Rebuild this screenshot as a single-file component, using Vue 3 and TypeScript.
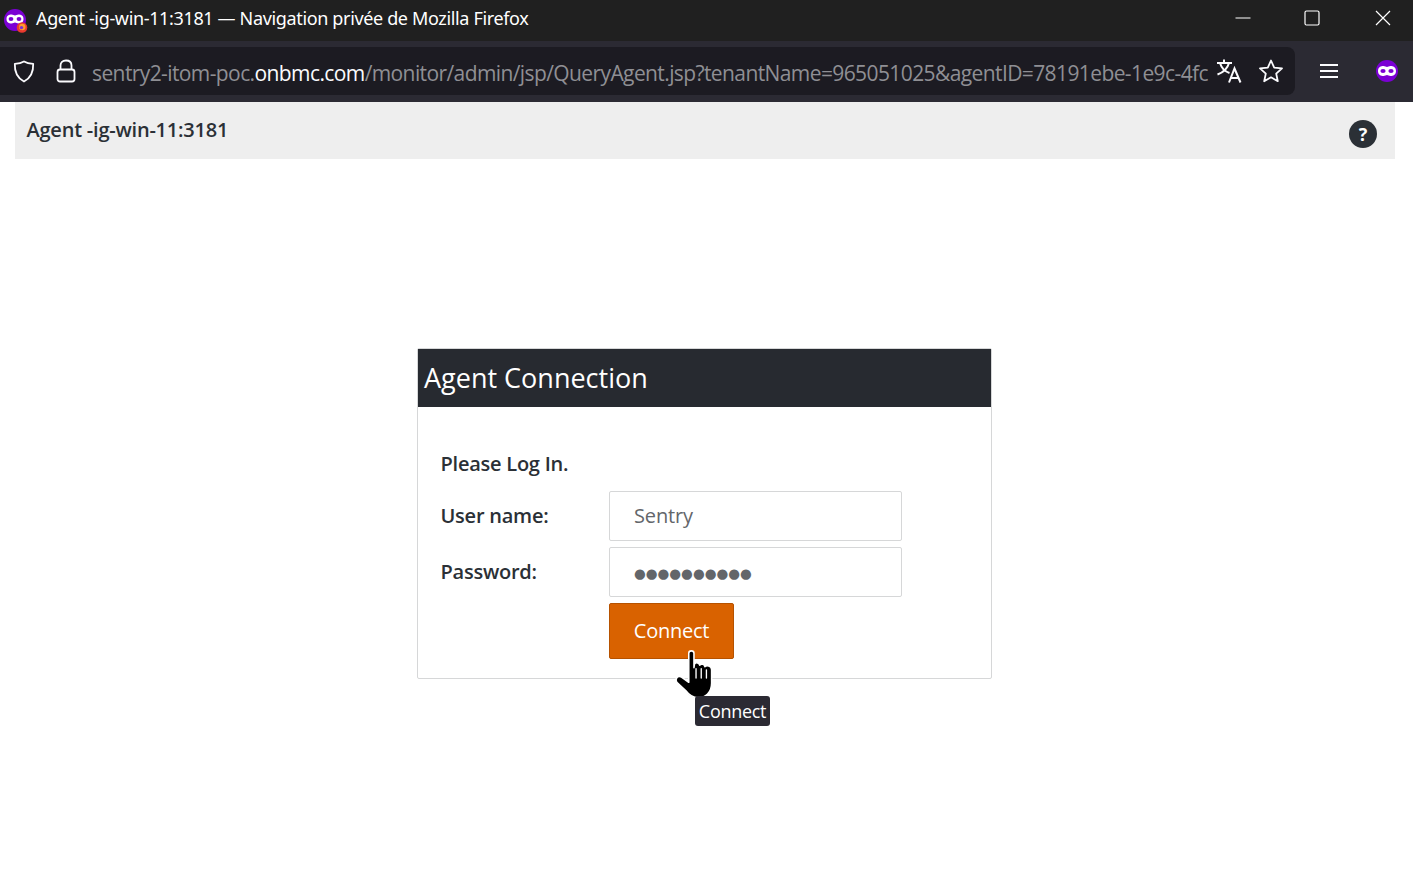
<script setup lang="ts">
const title = 'Agent -ig-win-11:3181'
const dots = '●●●●●●●●●●'
</script>

<template>
  <div class="window">
    <div class="titlebar">
      <div class="tb-left">
        <span class="favicon">
          <svg width="24" height="24" viewBox="0 0 24 24">
            <circle cx="11" cy="11" r="11" fill="#7b00d4" />
            <path d="M2.500 10C2.500 6.500 5 5.500 7.500 5.500C9 5.500 10 6.500 11 6.500C12 6.500 13 5.500 14.500 5.500C17 5.500 19.500 6.500 19.500 10C19.500 13.500 17 14.500 14.500 14.500C13 14.500 12 13.500 11 13.500C10 13.500 9 14.500 7.500 14.500C5 14.500 2.500 13.500 2.500 10Z" fill="#fff" />
            <ellipse cx="7" cy="10" rx="2.400" ry="1.900" fill="#7b00d4" />
            <ellipse cx="15" cy="10" rx="2.400" ry="1.900" fill="#7b00d4" />
            <circle cx="18" cy="18.500" r="5.300" fill="#e8392f" />
            <circle cx="18.300" cy="18" r="3.200" fill="#ff9b2b" />
            <circle cx="17.500" cy="18.600" r="1.700" fill="#7b2fd4" />
          </svg>
        </span>
        <span class="tb-title">{{ title }} — Navigation privée de Mozilla Firefox</span>
      </div>
      <div class="win-ctrls">
        <svg class="c1" width="16" height="16" viewBox="0 0 16 16"><path d="M0.500 8H15.500" stroke="#fff" stroke-width="1" /></svg>
        <svg class="c2" width="16" height="16" viewBox="0 0 16 16"><rect x="1" y="1" width="14" height="14" rx="1.500" fill="none" stroke="#fff" stroke-width="1.200" /></svg>
        <svg class="c3" width="16" height="16" viewBox="0 0 16 16"><path d="M1 1L15 15M15 1L1 15" stroke="#fff" stroke-width="1.200" /></svg>
      </div>
    </div>

    <div class="navbar">
      <div class="urlbar">
        <svg class="i-shield" width="24" height="24" viewBox="0 0 24 24" fill="none">
          <path d="M12 2.500C9.500 4 6.500 4.600 2.800 4.800C2.500 13 5 19 12 22.500C19 19 21.500 13 21.200 4.800C17.500 4.600 14.500 4 12 2.500Z" stroke="#fbfbfe" stroke-width="1.800" stroke-linejoin="round" />
        </svg>
        <svg class="i-lock" width="20" height="24" viewBox="0 0 20 24" fill="none">
          <rect x="1.500" y="10.500" width="17" height="12" rx="2.500" stroke="#fbfbfe" stroke-width="1.800" />
          <path d="M4.500 10V6.500C4.500 3.500 6.500 1.500 10 1.500C13.500 1.500 15.500 3.500 15.500 6.500V10" stroke="#fbfbfe" stroke-width="1.800" />
        </svg>
        <div class="url"><span class="dim">sentry2-itom-poc.</span><span class="bright">onbmc.com</span><span class="dim">/monitor/admin/jsp/QueryAgent.jsp?tenantName=965051025&amp;agentID=78191ebe-1e9c-4fc</span></div>
        <svg class="i-trans" width="26" height="24" viewBox="0 0 26 24" fill="none" stroke="#fbfbfe" stroke-width="2">
          <path d="M1 4H16M8 0.500V4M13 4C11.500 9.500 7 13.500 1.500 15.500M4 4C5.500 9 9 12.500 13.500 14" />
          <path d="M13 23.500L18.500 9.500L24.500 23.500M15 19H22.500" />
        </svg>
        <svg class="i-star" width="26" height="26" viewBox="0 0 26 26" fill="none">
          <path d="M13 2.500L16.200 9.600L24 10.400L18.200 15.600L19.800 23.200L13 19.300L6.200 23.200L7.800 15.600L2 10.400L9.800 9.600Z" stroke="#fbfbfe" stroke-width="1.800" stroke-linejoin="round" />
        </svg>
      </div>
      <div class="nav-right">
        <svg width="18" height="16" viewBox="0 0 18 16"><path d="M0 2H18M0 8H18M0 14H18" stroke="#fbfbfe" stroke-width="2" /></svg>
        <svg class="mask" width="22" height="22" viewBox="0 0 22 22">
          <circle cx="11" cy="11" r="11" fill="#7b00d4" />
          <path d="M2 11C2 7 5 6 7.500 6C9 6 10 7 11 7C12 7 13 6 14.500 6C17 6 20 7 20 11C20 15 17 16 14.500 16C13 16 12 15 11 15C10 15 9 16 7.500 16C5 16 2 15 2 11Z" fill="#fff" />
          <ellipse cx="7" cy="11" rx="2.600" ry="2.100" fill="#7b00d4" />
          <ellipse cx="15" cy="11" rx="2.600" ry="2.100" fill="#7b00d4" />
        </svg>
      </div>
    </div>

    <div class="page">
      <header class="page-head">
        <span class="page-title">{{ title }}</span>
        <span class="help">?</span>
      </header>

      <section class="card">
        <h2 class="card-head">Agent Connection</h2>
        <div class="card-body">
          <p class="lead">Please Log In.</p>
          <div class="row">
            <label>User name:</label>
            <div class="field">Sentry</div>
          </div>
          <div class="row">
            <label>Password:</label>
            <div class="field pw">{{ dots }}</div>
          </div>
          <div class="row btn-row">
            <label></label>
            <div class="btn-wrap">
              <div class="btn">Connect</div>
              <svg class="cursor" width="44" height="54" viewBox="0 0 42 52">
                <path d="M15 5C15 2 20 2 20 5V19L20.500 15.500C22 13.500 25 14 25.500 16.500C27 15 30 15.500 30.500 18C32 16.500 37 17 37 21V34C37 43 31 48 24 48C18 48 15 45 12 41L3.500 33C1.500 30 4 26 8 28L15 33Z" fill="#000" stroke="#fff" stroke-width="1.500" stroke-linejoin="round" />
                <path d="M22 20V29M27 20V29M32 21V29" stroke="#fff" stroke-width="1.300" stroke-linecap="round" />
              </svg>
              <span class="tip">Connect</span>
            </div>
          </div>
        </div>
      </section>
    </div>
  </div>
</template>

<style scoped>
.window {
  width: 1413px;
  height: 889px;
  overflow: hidden;
  background: #fff;
  display: flex;
  flex-direction: column;
  font-family: "Open Sans", "Noto Sans", sans-serif;
}
.titlebar {
  height: 41px;
  flex: none;
  background: #202020;
  display: flex;
  align-items: center;
  justify-content: space-between;
  color: #fff;
}
.tb-left {
  display: flex;
  align-items: center;
  padding-left: 4px;
}
.favicon {
  width: 32px;
  height: 24px;
  display: flex;
  margin-top: 1px;
}
.tb-title {
  font-size: 18px;
  letter-spacing: -0.35px;
  margin-top: -5px;
  font-family: "Noto Sans", "Open Sans", sans-serif;
}
.win-ctrls {
  display: flex;
  align-items: center;
  padding-right: 22px;
  margin-top: -5px;
}
.c1 { margin-right: 53px; }
.c2 { margin-right: 55px; }
.navbar {
  height: 61px;
  flex: none;
  background: #2b2a33;
  display: flex;
  padding: 6px 0 7px;
  box-sizing: border-box;
}
.urlbar {
  width: 1295px;
  flex: none;
  box-sizing: border-box;
  background: #1c1b22;
  border-radius: 0 8px 8px 0;
  display: flex;
  align-items: center;
  padding-left: 12px;
  min-width: 0;
}
.i-shield { flex: none; }
.i-lock { flex: none; margin-left: 20px; }
.url {
  margin-left: 16px;
  width: 1117px;
  flex: none;
  white-space: nowrap;
  font-size: 21px;
  letter-spacing: -0.6px;
  margin-top: 3px;
}
.dim { color: #8f8f94; }
.bright { color: #fbfbfe; }
.i-trans { flex: none; margin-left: 7px; }
.i-star { flex: none; margin-left: 16px; }
.nav-right {
  flex: 1;
  display: flex;
  align-items: center;
  padding-left: 25px;
}
.mask { margin-left: 38px; }
.page {
  flex: 1;
  padding: 0 18px 0 15px;
  display: flex;
  flex-direction: column;
}
.page-head {
  height: 57px;
  flex: none;
  background: #eeeeee;
  display: flex;
  justify-content: space-between;
  padding: 0 18px 0 12px;
  box-sizing: border-box;
}
.page-title {
  font-size: 20px;
  font-weight: 600;
  color: #2b3036;
  letter-spacing: -0.22px;
  margin-left: -0.5px;
  margin-top: 13px;
  line-height: 29px;
}
.help {
  width: 28px;
  height: 28px;
  margin-top: 18px;
  border-radius: 50%;
  background: #2b3036;
  color: #fff;
  font-size: 18px;
  font-weight: 700;
  line-height: 28px;
  text-align: center;
}
.card {
  width: 575px;
  height: 331px;
  box-sizing: border-box;
  margin: 189px 0 0 402px;
  border: 1px solid #d6d7d8;
  border-radius: 2px;
}
.card-head {
  margin: 0;
  height: 58px;
  background: #272a30;
  color: #fff;
  font-size: 27px;
  font-weight: 400;
  line-height: 57px;
  padding-left: 6px;
}
.card-body {
  padding: 42px 22.5px 0;
  color: #2b3036;
}
.lead {
  margin: 0 0 12px;
  font-size: 20px;
  font-weight: 600;
  line-height: 30px;
  letter-spacing: -0.24px;
}
.row {
  display: flex;
  align-items: center;
  margin-bottom: 6px;
}
.row label {
  width: 168.5px;
  flex: none;
  font-size: 20px;
  font-weight: 600;
  letter-spacing: -0.24px;
  padding-bottom: 2px;
}
.field {
  width: 293px;
  height: 50px;
  box-sizing: border-box;
  border: 1px solid #d6d7d8;
  border-radius: 2px;
  padding-left: 24px;
  font-size: 20px;
  line-height: 48px;
  letter-spacing: -0.15px;
  color: #63666a;
}
.pw {
  font-family: "DejaVu Sans", sans-serif;
  font-size: 13.5px;
  letter-spacing: 0;
  line-height: 50px;
}
.btn-row {
  align-items: flex-start;
}
.btn-wrap {
  position: relative;
}
.btn {
  width: 125px;
  height: 56px;
  box-sizing: border-box;
  background: #d96200;
  border: 1px solid #b65200;
  border-radius: 2px;
  color: #fff;
  font-size: 20px;
  line-height: 54px;
  letter-spacing: -0.25px;
  text-align: center;
}
.cursor {
  position: absolute;
  left: 64px;
  top: 45px;
}
.tip {
  position: absolute;
  left: 86px;
  top: 93px;
  width: 75px;
  height: 30px;
  box-sizing: border-box;
  background: #2b2a33;
  border-radius: 3px;
  color: #fff;
  font-size: 18px;
  line-height: 31px;
  text-align: center;
  letter-spacing: -0.3px;
}
</style>
